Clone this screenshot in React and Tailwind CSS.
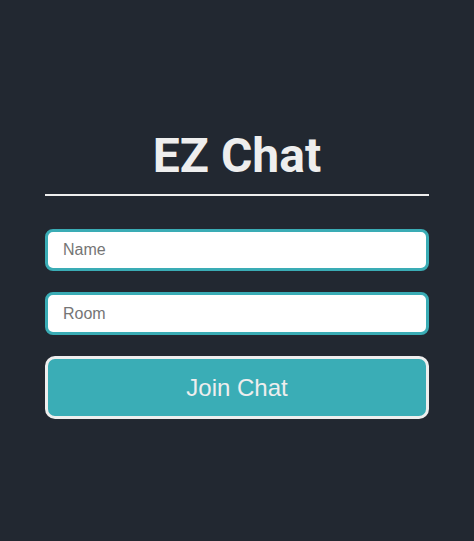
import React, { useState } from "react";

const App = () => {
  const [name, setName] = useState("");
  const [room, setRoom] = useState("");

  return (
    <div className="min-h-screen bg-[#222831] pt-[128px]">
      <div className="mx-auto w-[384px]">
        <h1
          className="border-b-2 border-[#eeeeee] pb-[10px] text-center text-[48px] font-bold leading-[56px] text-[#eeeeee]"
          style={{ fontFamily: "Roboto, sans-serif" }}
        >
          EZ Chat
        </h1>
        <form
          className="mt-[33px] flex flex-col gap-[21px]"
          style={{ fontFamily: '"Liberation Sans", Arial, sans-serif' }}
          onSubmit={(e) => e.preventDefault()}
        >
          <input
            type="text"
            placeholder="Name"
            value={name}
            onChange={(e) => setName(e.target.value)}
            className="h-[42px] w-full rounded-lg border-[3px] border-[#3aacb5] bg-white px-[15px] text-base text-gray-800 placeholder:text-[#757575] outline-none"
          />
          <input
            type="text"
            placeholder="Room"
            value={room}
            onChange={(e) => setRoom(e.target.value)}
            className="h-[43px] w-full rounded-lg border-[3px] border-[#3aacb5] bg-white px-[15px] text-base text-gray-800 placeholder:text-[#757575] outline-none"
          />
          <button
            type="submit"
            className="h-[63px] w-full rounded-[10px] border-[3px] border-[#eeeeee] bg-[#3aadb6] text-[24px] text-[#eeeeee]"
          >
            Join Chat
          </button>
        </form>
      </div>
    </div>
  );
};

export default App;
